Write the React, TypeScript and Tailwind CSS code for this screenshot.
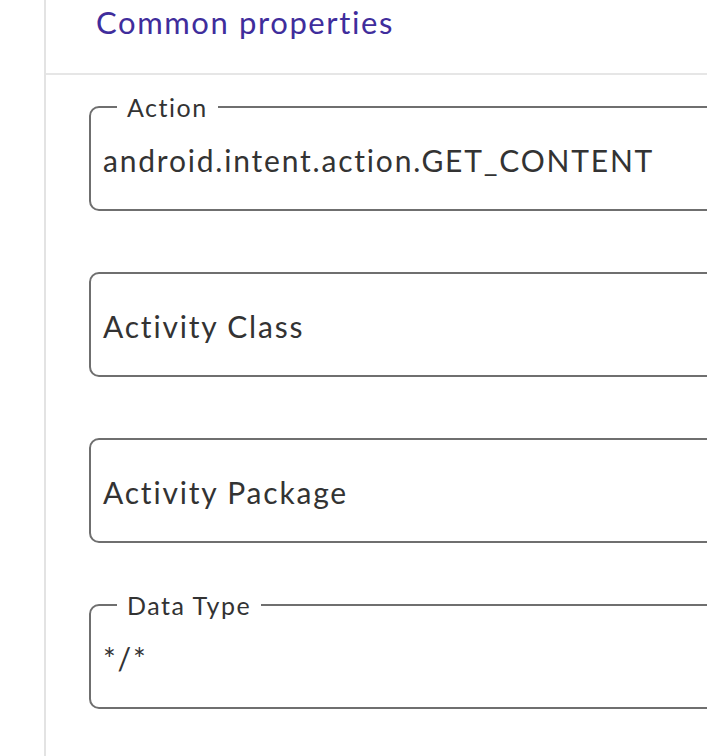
import React from "react";

type Field = {
  label: string;
  value?: string;
};

const fields: Field[] = [
  { label: "Action", value: "android.intent.action.GET_CONTENT" },
  { label: "Activity Class" },
  { label: "Activity Package" },
  { label: "Data Type", value: "*/*" },
];

const OutlinedField: React.FC<Field> = ({ label, value }) => {
  const filled = value !== undefined && value !== "";

  return (
    <fieldset className="rounded-[10px] border-2 border-[#6f6f6f] w-[700px]">
      {filled ? (
        <legend className="ml-[26px] px-[10px] h-[28px] text-[25px] leading-[28px] tracking-[1.5px] text-[#333333]">
          {label}
        </legend>
      ) : (
        <legend className="h-[28px] w-0 p-0" />
      )}
      <div className="h-[88px] flex items-center px-[12px] pb-[10px] text-[30px] leading-[36px] tracking-[1.8px] text-[#333333]">
        {filled ? value : label}
      </div>
    </fieldset>
  );
};

export default function App() {
  return (
    <div
      className="w-[707px] h-[756px] overflow-hidden bg-white"
      style={{ fontFamily: "Lato, 'Noto Sans', sans-serif" }}
    >
      <div className="ml-[44px] h-full border-l-2 border-[#e3e3e3]">
        {/* Encabezado */}
        <div className="h-[75px] border-b-2 border-[#e6e6e6] pl-[50px] pt-[2px]">
          <h2 className="text-[31px] leading-[40px] tracking-[1.6px] text-[#3f2d9c]">
            Common properties
          </h2>
        </div>

        {/* Campos */}
        <div className="ml-[43px] pt-[18px] flex flex-col gap-[48px]">
          {fields.map((f) => (
            <OutlinedField key={f.label} label={f.label} value={f.value} />
          ))}
        </div>
      </div>
    </div>
  );
}
